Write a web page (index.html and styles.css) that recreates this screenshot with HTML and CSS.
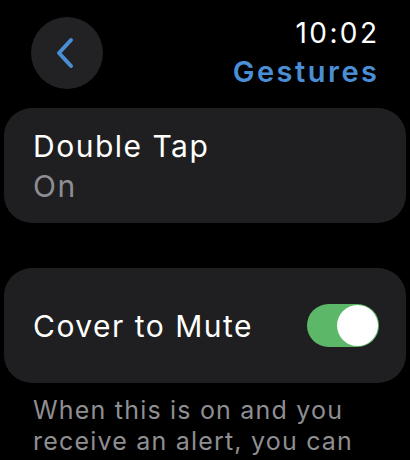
FILE: index.html
```html
<!DOCTYPE html>
<html lang="en">
<head>
    <meta charset="UTF-8">
    <meta name="viewport" content="width=device-width, initial-scale=1.0">
    <title>Gestures</title>
    <link rel="stylesheet" href="styles.css">
</head>
<body>
    <div class="screen">
        <header class="top-bar">
            <button class="back-btn" aria-label="Back">
                <svg width="20" height="32" viewBox="0 0 20 32">
                    <path d="M16 3 L4 16 L16 29" fill="none" stroke="#4a8fd6" stroke-width="4" stroke-linecap="round" stroke-linejoin="round"/>
                </svg>
            </button>
            <div class="title-block">
                <div class="clock">10:02</div>
                <div class="page-title">Gestures</div>
            </div>
        </header>

        <div class="card card-stack">
            <div class="card-title">Double Tap</div>
            <div class="card-value">On</div>
        </div>

        <div class="card card-row">
            <div class="card-title">Cover to Mute</div>
            <div class="toggle on"><div class="knob"></div></div>
        </div>

        <p class="note">When this is on and you receive an alert, you can</p>
    </div>
</body>
</html>
```

FILE: styles.css
```css
* {
    box-sizing: border-box;
    margin: 0;
    padding: 0;
    font-family: 'Inter', 'Roboto', sans-serif;
}

body {
    background-color: #000;
    width: 410px;
    height: 460px;
    overflow: hidden;
}

.screen {
    padding: 17px 4px 0 4px;
}

.top-bar {
    display: flex;
    justify-content: space-between;
    align-items: flex-start;
    padding: 0 29px 0 27px;
    height: 91px;
}

.back-btn {
    width: 72px;
    height: 72px;
    border-radius: 50%;
    border: none;
    background-color: #222224;
    display: flex;
    justify-content: center;
    align-items: center;
    padding-right: 4px;
}

.title-block {
    text-align: right;
}

.clock {
    color: #fff;
    font-size: 28px;
    line-height: 32px;
    letter-spacing: 2.4px;
    margin-right: -2.4px;
}

.page-title {
    color: #4a8fd6;
    font-size: 29px;
    font-weight: 600;
    line-height: 40px;
    letter-spacing: 2.5px;
    margin-right: -2.5px;
    margin-top: 3px;
}

.card {
    background-color: #1f1f21;
    border-radius: 28px;
    padding: 0 27px 0 29px;
}

.card-stack {
    height: 115px;
    padding-top: 18px;
}

.card-row {
    height: 115px;
    margin-top: 45px;
    display: flex;
    justify-content: space-between;
    align-items: center;
}

.card-title {
    color: #fff;
    font-size: 30px;
    line-height: 40px;
    letter-spacing: 1.5px;
}

.card-value {
    color: #8e8e93;
    font-size: 30px;
    line-height: 40px;
    letter-spacing: 1.5px;
}

.toggle {
    width: 72px;
    height: 43px;
    border-radius: 22px;
    background-color: #5cb868;
    display: flex;
    align-items: center;
    justify-content: flex-end;
    padding: 1px;
}

.knob {
    width: 41px;
    height: 41px;
    border-radius: 50%;
    background-color: #fff;
}

.note {
    color: #8e8e93;
    font-size: 25px;
    line-height: 31px;
    letter-spacing: 1.2px;
    padding: 12px 29px 0 29px;
}
```
